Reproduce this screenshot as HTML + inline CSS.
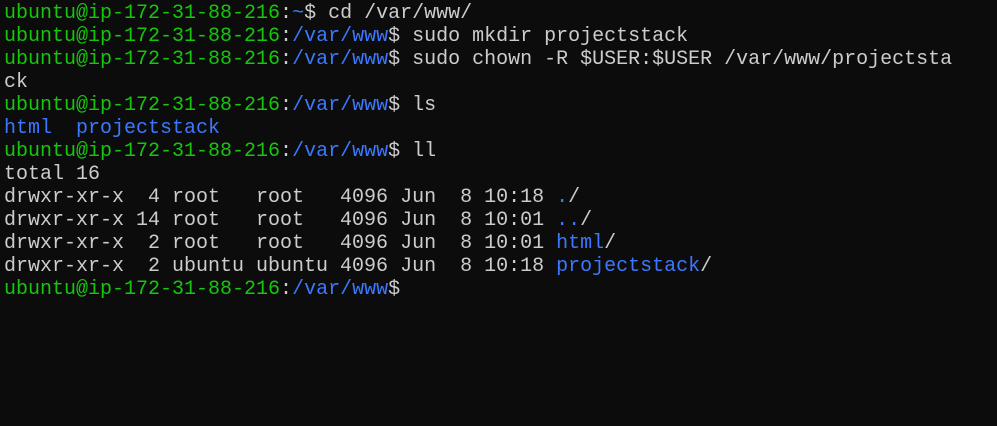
<!DOCTYPE html>
<html><head><meta charset="utf-8"><style>
html,body{margin:0;padding:0;background:#0c0c0c;width:997px;height:426px;overflow:hidden}
pre{margin:0;padding:2px 0 0 4px;font-family:"Liberation Mono","DejaVu Sans Mono",monospace;font-size:20px;line-height:23px;color:#cccccc;white-space:pre}
.g{color:#16c60c}.b{color:#3b78ff}
</style></head><body><pre><span class="g">ubuntu@ip-172-31-88-216</span>:<span class="b">~</span>$ cd /var/www/
<span class="g">ubuntu@ip-172-31-88-216</span>:<span class="b">/var/www</span>$ sudo mkdir projectstack
<span class="g">ubuntu@ip-172-31-88-216</span>:<span class="b">/var/www</span>$ sudo chown -R $USER:$USER /var/www/projectsta
ck
<span class="g">ubuntu@ip-172-31-88-216</span>:<span class="b">/var/www</span>$ ls
<span class="b">html</span>  <span class="b">projectstack</span>
<span class="g">ubuntu@ip-172-31-88-216</span>:<span class="b">/var/www</span>$ ll
total 16
drwxr-xr-x  4 root   root   4096 Jun  8 10:18 <span class="b">.</span>/
drwxr-xr-x 14 root   root   4096 Jun  8 10:01 <span class="b">..</span>/
drwxr-xr-x  2 root   root   4096 Jun  8 10:01 <span class="b">html</span>/
drwxr-xr-x  2 ubuntu ubuntu 4096 Jun  8 10:18 <span class="b">projectstack</span>/
<span class="g">ubuntu@ip-172-31-88-216</span>:<span class="b">/var/www</span>$</pre></body></html>
